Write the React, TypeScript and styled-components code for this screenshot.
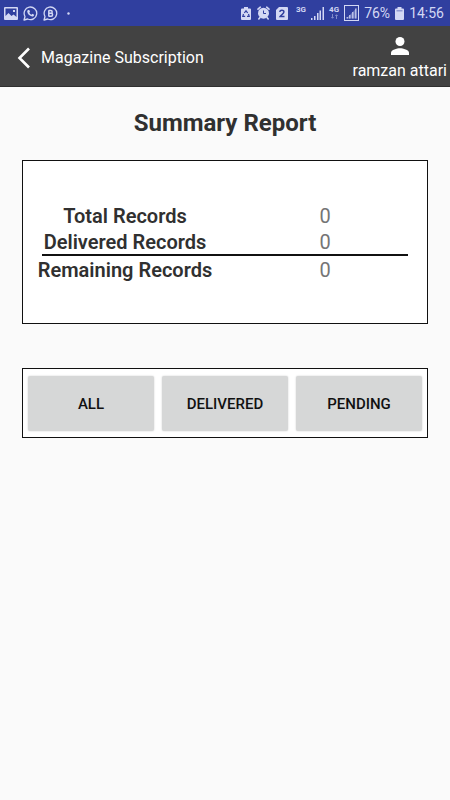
import React from "react";
import styled, { createGlobalStyle } from "styled-components";

const GlobalStyle = createGlobalStyle`
  * { box-sizing: border-box; }
  body {
    margin: 0;
    background: #fafafa;
    font-family: Roboto, "Liberation Sans", sans-serif;
  }
`;

const StatusBar = styled.div`
  display: flex;
  align-items: center;
  justify-content: space-between;
  height: 26px;
  padding: 0 6px 0 4px;
  background: #303f9f;
  color: #d3d8f4;
`;

const StatusGroup = styled.div<{ $gap: number }>`
  display: flex;
  align-items: center;
  gap: ${(p) => p.$gap}px;

  svg {
    display: block;
    flex: none;
  }
`;

const StatusText = styled.span`
  font-size: 14px;
  line-height: 20px;
`;

const Network = styled.span`
  display: flex;
  flex-direction: column;
  align-items: center;
  height: 14px;
  font-size: 8px;
  line-height: 8px;
  font-weight: 700;
`;

const Header = styled.header`
  display: flex;
  align-items: center;
  justify-content: space-between;
  height: 61px;
  padding: 3px 3px 0 17px;
  background: #424242;
  border-bottom: 1px solid #303030;
  color: #fff;
`;

const BackButton = styled.button`
  display: flex;
  align-items: center;
  gap: 10px;
  padding: 0;
  border: 0;
  background: none;
  color: inherit;
  font: inherit;
  font-size: 16px;
  line-height: 24px;
  cursor: pointer;
`;

const User = styled.div`
  display: flex;
  flex-direction: column;
  align-items: center;
  gap: 4px;
  padding-top: 4px;
  font-size: 16px;
  line-height: 24px;

  svg {
    display: block;
  }
`;

const Main = styled.main`
  padding: 20px 22px;
`;

const Title = styled.h1`
  margin: 0 0 21px;
  color: #303030;
  font-size: 24px;
  line-height: 32px;
  font-weight: 700;
  text-align: center;
`;

const Card = styled.section`
  background: #fff;
  border: 1px solid #111;
`;

const SummaryCard = styled(Card)`
  padding: 41px 2px;
`;

const Table = styled.table`
  width: 100%;
  table-layout: fixed;
  border-collapse: collapse;
  font-size: 20px;
  line-height: 24px;

  th, td {
    padding: 2px 0 0;
    text-align: center;
    white-space: nowrap;
  }
  th {
    color: #303030;
    font-weight: 600;
  }
  td {
    color: #757575;
  }
  td[colspan] {
    padding: 0;
  }
`;

const Rule = styled.hr`
  height: 2px;
  margin: 0 17px;
  border: 0;
  background: #111;
`;

const Actions = styled(Card)`
  display: grid;
  grid-template-columns: repeat(3, 1fr);
  gap: 8px;
  margin-top: 44px;
  padding: 7px 5px 6px;
`;

const ActionButton = styled.button`
  height: 55px;
  padding: 0;
  border: 0;
  border-radius: 2px;
  background: #d6d7d7;
  box-shadow: 0 0 2px rgba(0, 0, 0, 0.2);
  color: #111;
  font: inherit;
  font-size: 15px;
  font-weight: 500;
  cursor: pointer;
`;

const PictureIcon = () => (
  <svg width="14" height="13" viewBox="0 0 14 13">
    <path fill="currentColor" fillRule="evenodd" d="M1 0h12a1 1 0 0 1 1 1v11a1 1 0 0 1-1 1H1a1 1 0 0 1-1-1V1a1 1 0 0 1 1-1zM1.500 1.500v7.500l3-3 3 3 2-1.500 3 2.500v-8.500zM9 3h2v2H9z" />
  </svg>
);

const WhatsAppIcon = () => (
  <svg width="15" height="15" viewBox="0 0 15 15">
    <path fill="none" stroke="currentColor" strokeWidth="1.300" strokeLinejoin="round" d="M1 14l1-3.500A6.300 6.300 0 1 1 4.700 13z" />
    <path fill="currentColor" d="M5.300 4l1 .1.700 1.700-.7.900c.5 1 1.200 1.600 2.200 2.100l.9-1 1.700.9c0 1.200-.9 1.900-1.900 1.800C6.500 10.200 4.400 8 4.200 5.600 4.200 4.900 4.700 4.200 5.300 4z" />
  </svg>
);

const BusinessIcon = () => (
  <svg width="15" height="15" viewBox="0 0 15 15" fill="none" stroke="currentColor">
    <path strokeWidth="1.300" strokeLinejoin="round" d="M1 14l1-3.500A6.300 6.300 0 1 1 4.700 13z" />
    <path strokeWidth="1.500" d="M5.800 4.200v6.400M5.800 4.500h2a1.400 1.400 0 0 1 0 2.800h-2M5.800 7.300h2.300a1.500 1.500 0 0 1 0 3H5.800" />
  </svg>
);

const DotIcon = () => (
  <svg width="3" height="3" viewBox="0 0 3 3">
    <circle cx="1.500" cy="1.500" r="1.200" fill="currentColor" />
  </svg>
);

const RecycleBatteryIcon = () => (
  <svg width="10" height="13" viewBox="0 0 10 13">
    <path fill="currentColor" d="M3 0h4v1.500h2a1 1 0 0 1 1 1V12a1 1 0 0 1-1 1H1a1 1 0 0 1-1-1V2.500a1 1 0 0 1 1-1h2z" />
    <path fill="none" stroke="#303f9f" strokeWidth="1.200" d="M3.300 6L5 3.800 6.700 6M7.500 7l.7 2.300H6M4.200 9.300H1.800L2.500 7" />
  </svg>
);

const AlarmIcon = () => (
  <svg width="13" height="14" viewBox="0 0 13 14">
    <circle cx="6.500" cy="7.200" r="5.500" fill="currentColor" />
    <path fill="none" stroke="currentColor" strokeWidth="1.600" strokeLinecap="round" d="M1 3.200L3.300 1.200M12 3.200L9.700 1.200M3 11.500l-1.200 1.500M10 11.500l1.200 1.500" />
    <path fill="none" stroke="#303f9f" strokeWidth="1" d="M6.500 4.500v3H9" />
  </svg>
);

const SimIcon = () => (
  <svg width="12" height="13" viewBox="0 0 12 13">
    <path fill="currentColor" d="M3 0h8a1 1 0 0 1 1 1v11a1 1 0 0 1-1 1H1a1 1 0 0 1-1-1V3z" />
    <path fill="none" stroke="#303f9f" strokeWidth="1.500" d="M3.800 5C4 2.600 8 2.700 7.900 5c0 1.500-2.700 3-3.700 4.500h4.300" />
  </svg>
);

const SignalIcon = () => (
  <svg width="13" height="13" viewBox="0 0 13 13" fill="currentColor">
    <path d="M0 11h1.500v2H0zM3 9h1.500v4H3zM6 6h1.500v7H6zM8.500 3.500H10V13H8.500zM11.500 0H13v13h-1.500z" />
  </svg>
);

const BoxedSignalIcon = () => (
  <svg width="15" height="16" viewBox="0 0 15 16">
    <rect x=".5" y=".5" width="14" height="15" fill="none" stroke="currentColor" />
    <path fill="currentColor" opacity=".35" d="M2.500 13.500L12.500 3v10.500z" />
    <path fill="currentColor" opacity=".75" d="M2.500 12h1.500v1.500H2.500zM5 10h1.500v3.500H5zM8 7h1.500v6.500H8zM11 3.500h1.500v10H11z" />
  </svg>
);

const ArrowsIcon = () => (
  <svg width="7" height="5" viewBox="0 0 7 5" opacity=".5" fill="none" stroke="currentColor">
    <path d="M1.500 0v4M.3 3l1.200 1.300L2.700 3M5.500 5V1M4.300 2L5.500.7 6.700 2" />
  </svg>
);

const BatteryIcon = () => (
  <svg width="9" height="13" viewBox="0 0 9 13">
    <path fill="currentColor" d="M2.500 0h4v1.500H8a1 1 0 0 1 1 1V12a1 1 0 0 1-1 1H1a1 1 0 0 1-1-1V2.500a1 1 0 0 1 1-1h1.500z" />
    <path fill="#303f9f" opacity=".4" d="M1.500 3h6v1.500h-6z" />
  </svg>
);

const BackIcon = () => (
  <svg width="14" height="22" viewBox="0 0 14 22">
    <path fill="none" stroke="currentColor" strokeWidth="2.600" d="M12 1.500L2.500 11 12 20.500" />
  </svg>
);

const PersonIcon = () => (
  <svg width="18" height="18" viewBox="0 0 18 18" fill="currentColor">
    <circle cx="9" cy="4.500" r="4.500" />
    <path d="M0 18v-2.300C0 12.700 6 11.200 9 11.200s9 1.500 9 4.500V18z" />
  </svg>
);

const records = [
  { label: "Total Records", value: 0 },
  { label: "Delivered Records", value: 0 },
];

const actions = ["ALL", "DELIVERED", "PENDING"];

const RecordRow = ({ label, value }: { label: string; value: number }) => (
  <tr>
    <th scope="row">{label}</th>
    <td>{value}</td>
  </tr>
);

export default function App() {
  return (
    <>
      <GlobalStyle />
      <StatusBar>
        <StatusGroup $gap={9}>
          <StatusGroup $gap={5}>
            <PictureIcon />
            <WhatsAppIcon />
            <BusinessIcon />
          </StatusGroup>
          <DotIcon />
        </StatusGroup>
        <StatusGroup $gap={8}>
          <StatusGroup $gap={6}>
            <RecycleBatteryIcon />
            <AlarmIcon />
            <SimIcon />
          </StatusGroup>
          <StatusGroup $gap={5}>
            <Network>3G</Network>
            <SignalIcon />
            <Network>
              4G
              <ArrowsIcon />
            </Network>
            <BoxedSignalIcon />
            <StatusText>76%</StatusText>
            <BatteryIcon />
            <StatusText>14:56</StatusText>
          </StatusGroup>
        </StatusGroup>
      </StatusBar>
      <Header>
        <BackButton type="button">
          <BackIcon />
          Magazine Subscription
        </BackButton>
        <User>
          <PersonIcon />
          ramzan attari
        </User>
      </Header>
      <Main>
        <Title>Summary Report</Title>
        <SummaryCard>
          <Table>
            <tbody>
              {records.map((r) => (
                <RecordRow key={r.label} {...r} />
              ))}
              <tr>
                <td colSpan={2}>
                  <Rule />
                </td>
              </tr>
              <RecordRow label="Remaining Records" value={0} />
            </tbody>
          </Table>
        </SummaryCard>
        <Actions>
          {actions.map((a) => (
            <ActionButton key={a} type="button">
              {a}
            </ActionButton>
          ))}
        </Actions>
      </Main>
    </>
  );
}
